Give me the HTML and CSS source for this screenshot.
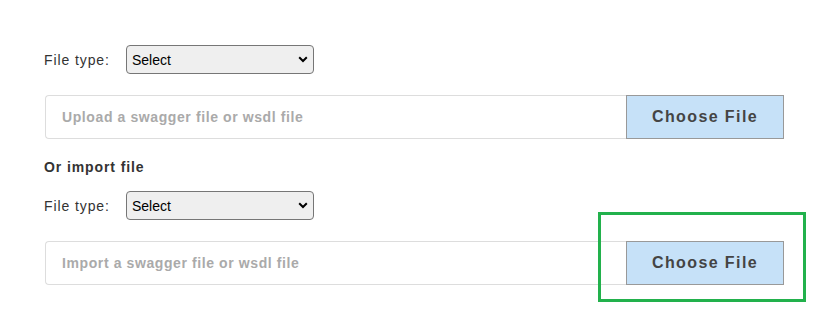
FILE: index.html
```html
<!DOCTYPE html>
<html lang="en">
<head>
  <meta charset="UTF-8">
  <meta name="viewport" content="width=device-width, initial-scale=1.0">
  <title>Import API</title>
  <link rel="stylesheet" href="styles.css">
</head>
<body>

  <div class="page">
    <div class="field-row">
      <label for="uploadType">File type:</label>
      <select id="uploadType" class="type-select">
        <option>Select</option>
        <option>Swagger</option>
        <option>WSDL</option>
      </select>
    </div>

    <div class="upload-group">
      <div class="upload-text">Upload a swagger file or wsdl file</div>
      <button class="choose-btn">Choose File</button>
    </div>

    <h4 class="section-title">Or import file</h4>

    <div class="field-row">
      <label for="importType">File type:</label>
      <select id="importType" class="type-select">
        <option>Select</option>
        <option>Swagger</option>
        <option>WSDL</option>
      </select>
    </div>

    <div class="upload-group">
      <div class="upload-text">Import a swagger file or wsdl file</div>
      <button class="choose-btn">Choose File</button>
      <div class="highlight"></div>
    </div>
  </div>

</body>
</html>
```

FILE: styles.css
```css
/* General Styles */
* {
  margin: 0;
  padding: 0;
  box-sizing: border-box;
}

body {
  font-family: 'Liberation Sans', Arial, sans-serif;
  background-color: #ffffff;
  color: #333333;
}

.page {
  width: 784px;
  min-height: 323px;
  padding: 45px 0 0 44px;
}

.field-row {
  display: flex;
  align-items: center;
  height: 29px;
}

.field-row label {
  width: 82px;
  font-size: 14px;
  letter-spacing: 0.9px;
  color: #333333;
}

.type-select {
  -webkit-appearance: none;
  appearance: none;
  width: 188px;
  height: 29px;
  padding: 0 24px 0 5px;
  font-family: 'Liberation Sans', Arial, sans-serif;
  font-size: 14px;
  color: #000000;
  background-color: #efefef;
  background-image: url("data:image/svg+xml;utf8,<svg xmlns='http://www.w3.org/2000/svg' width='10' height='7' viewBox='0 0 10 7'><path d='M1.2 1.3 L5 5 L8.8 1.3' fill='none' stroke='black' stroke-width='2'/></svg>");
  background-repeat: no-repeat;
  background-position: right 5px center;
  border: 1px solid #767676;
  border-radius: 4px;
}

.upload-group {
  position: relative;
  display: flex;
  height: 44px;
  margin: 21px 0 0 1px;
}

.upload-text {
  flex: 1;
  display: flex;
  align-items: center;
  padding-left: 16px;
  font-size: 14px;
  font-weight: bold;
  letter-spacing: 0.6px;
  color: #aaaaaa;
  border: 1px solid #dddddd;
  border-right: none;
  border-radius: 4px 0 0 4px;
}

.choose-btn {
  width: 158px;
  font-family: 'Liberation Sans', Arial, sans-serif;
  font-size: 16px;
  font-weight: bold;
  letter-spacing: 1.4px;
  color: #444444;
  background-color: #c6e1f8;
  border: 1px solid #999999;
  cursor: pointer;
}

.section-title {
  margin: 21px 0 16px;
  font-size: 14px;
  line-height: 15px;
  letter-spacing: 0.9px;
  color: #333333;
}

/* annotation box round the second button */
.highlight {
  position: absolute;
  left: 553px;
  top: -29px;
  width: 208px;
  height: 90px;
  border: 3px solid #22b14c;
  pointer-events: none;
}
```
